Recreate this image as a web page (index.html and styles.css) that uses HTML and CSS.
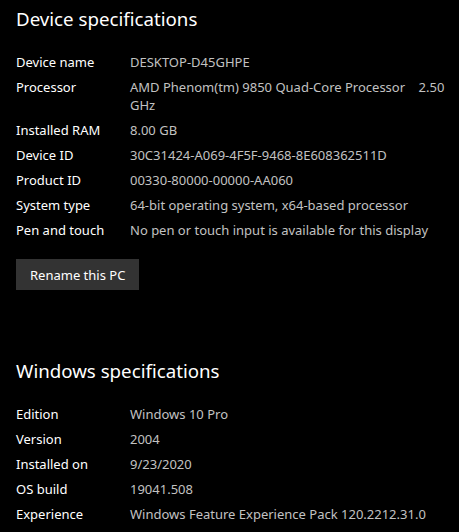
FILE: index.html
```html
<!DOCTYPE html>
<html lang="en">
<head>
<meta charset="utf-8">
<title>About</title>
<link rel="stylesheet" href="styles.css">
</head>
<body>
<main class="page">
  <section class="section">
    <h2 class="heading">Device specifications</h2>
    <dl class="specs">
      <div class="row"><dt>Device name</dt><dd>DESKTOP-D45GHPE</dd></div>
      <div class="row"><dt>Processor</dt><dd>AMD Phenom(tm) 9850 Quad-Core Processor&nbsp;&nbsp;&nbsp; 2.50<br>GHz</dd></div>
      <div class="row"><dt>Installed RAM</dt><dd>8.00 GB</dd></div>
      <div class="row"><dt>Device ID</dt><dd>30C31424-A069-4F5F-9468-8E608362511D</dd></div>
      <div class="row"><dt>Product ID</dt><dd>00330-80000-00000-AA060</dd></div>
      <div class="row"><dt>System type</dt><dd>64-bit operating system, x64-based processor</dd></div>
      <div class="row"><dt>Pen and touch</dt><dd>No pen or touch input is available for this display</dd></div>
    </dl>
    <button class="btn" type="button">Rename this PC</button>
  </section>
  <section class="section section-windows">
    <h2 class="heading">Windows specifications</h2>
    <dl class="specs">
      <div class="row"><dt>Edition</dt><dd>Windows 10 Pro</dd></div>
      <div class="row"><dt>Version</dt><dd>2004</dd></div>
      <div class="row"><dt>Installed on</dt><dd>9/23/2020</dd></div>
      <div class="row"><dt>OS build</dt><dd>19041.508</dd></div>
      <div class="row"><dt>Experience</dt><dd>Windows Feature Experience Pack 120.2212.31.0</dd></div>
    </dl>
  </section>
</main>
</body>
</html>
```
FILE: styles.css
```css
html, body {
  margin: 0;
  padding: 0;
  background: #000;
}
body {
  font-family: "Noto Sans", "Open Sans", sans-serif;
  color: #fff;
  font-size: 13px;
}
.page {
  padding: 5px 11px 0 16px;
}
.section {
  display: flex;
  flex-direction: column;
  align-items: flex-start;
}
.section-windows {
  margin-top: 67px;
}
.heading {
  margin: 0 0 20px;
  font-size: 18.7px;
  font-weight: 400;
  line-height: 28px;
  color: #fff;
}
.specs {
  margin: 0;
  display: flex;
  flex-direction: column;
  gap: 7px;
  width: 100%;
}
.row {
  display: grid;
  grid-template-columns: 114px 1fr;
  line-height: 18px;
}
.row dt {
  color: #fff;
}
.row dd {
  margin: 0;
  color: #c2c2c2;
  white-space: nowrap;
}
.btn {
  margin-top: 20px;
  height: 31px;
  padding: 0 14px;
  border: none;
  background: #333;
  color: #fff;
  font-family: inherit;
  font-size: 13px;
  line-height: 18px;
}
```
